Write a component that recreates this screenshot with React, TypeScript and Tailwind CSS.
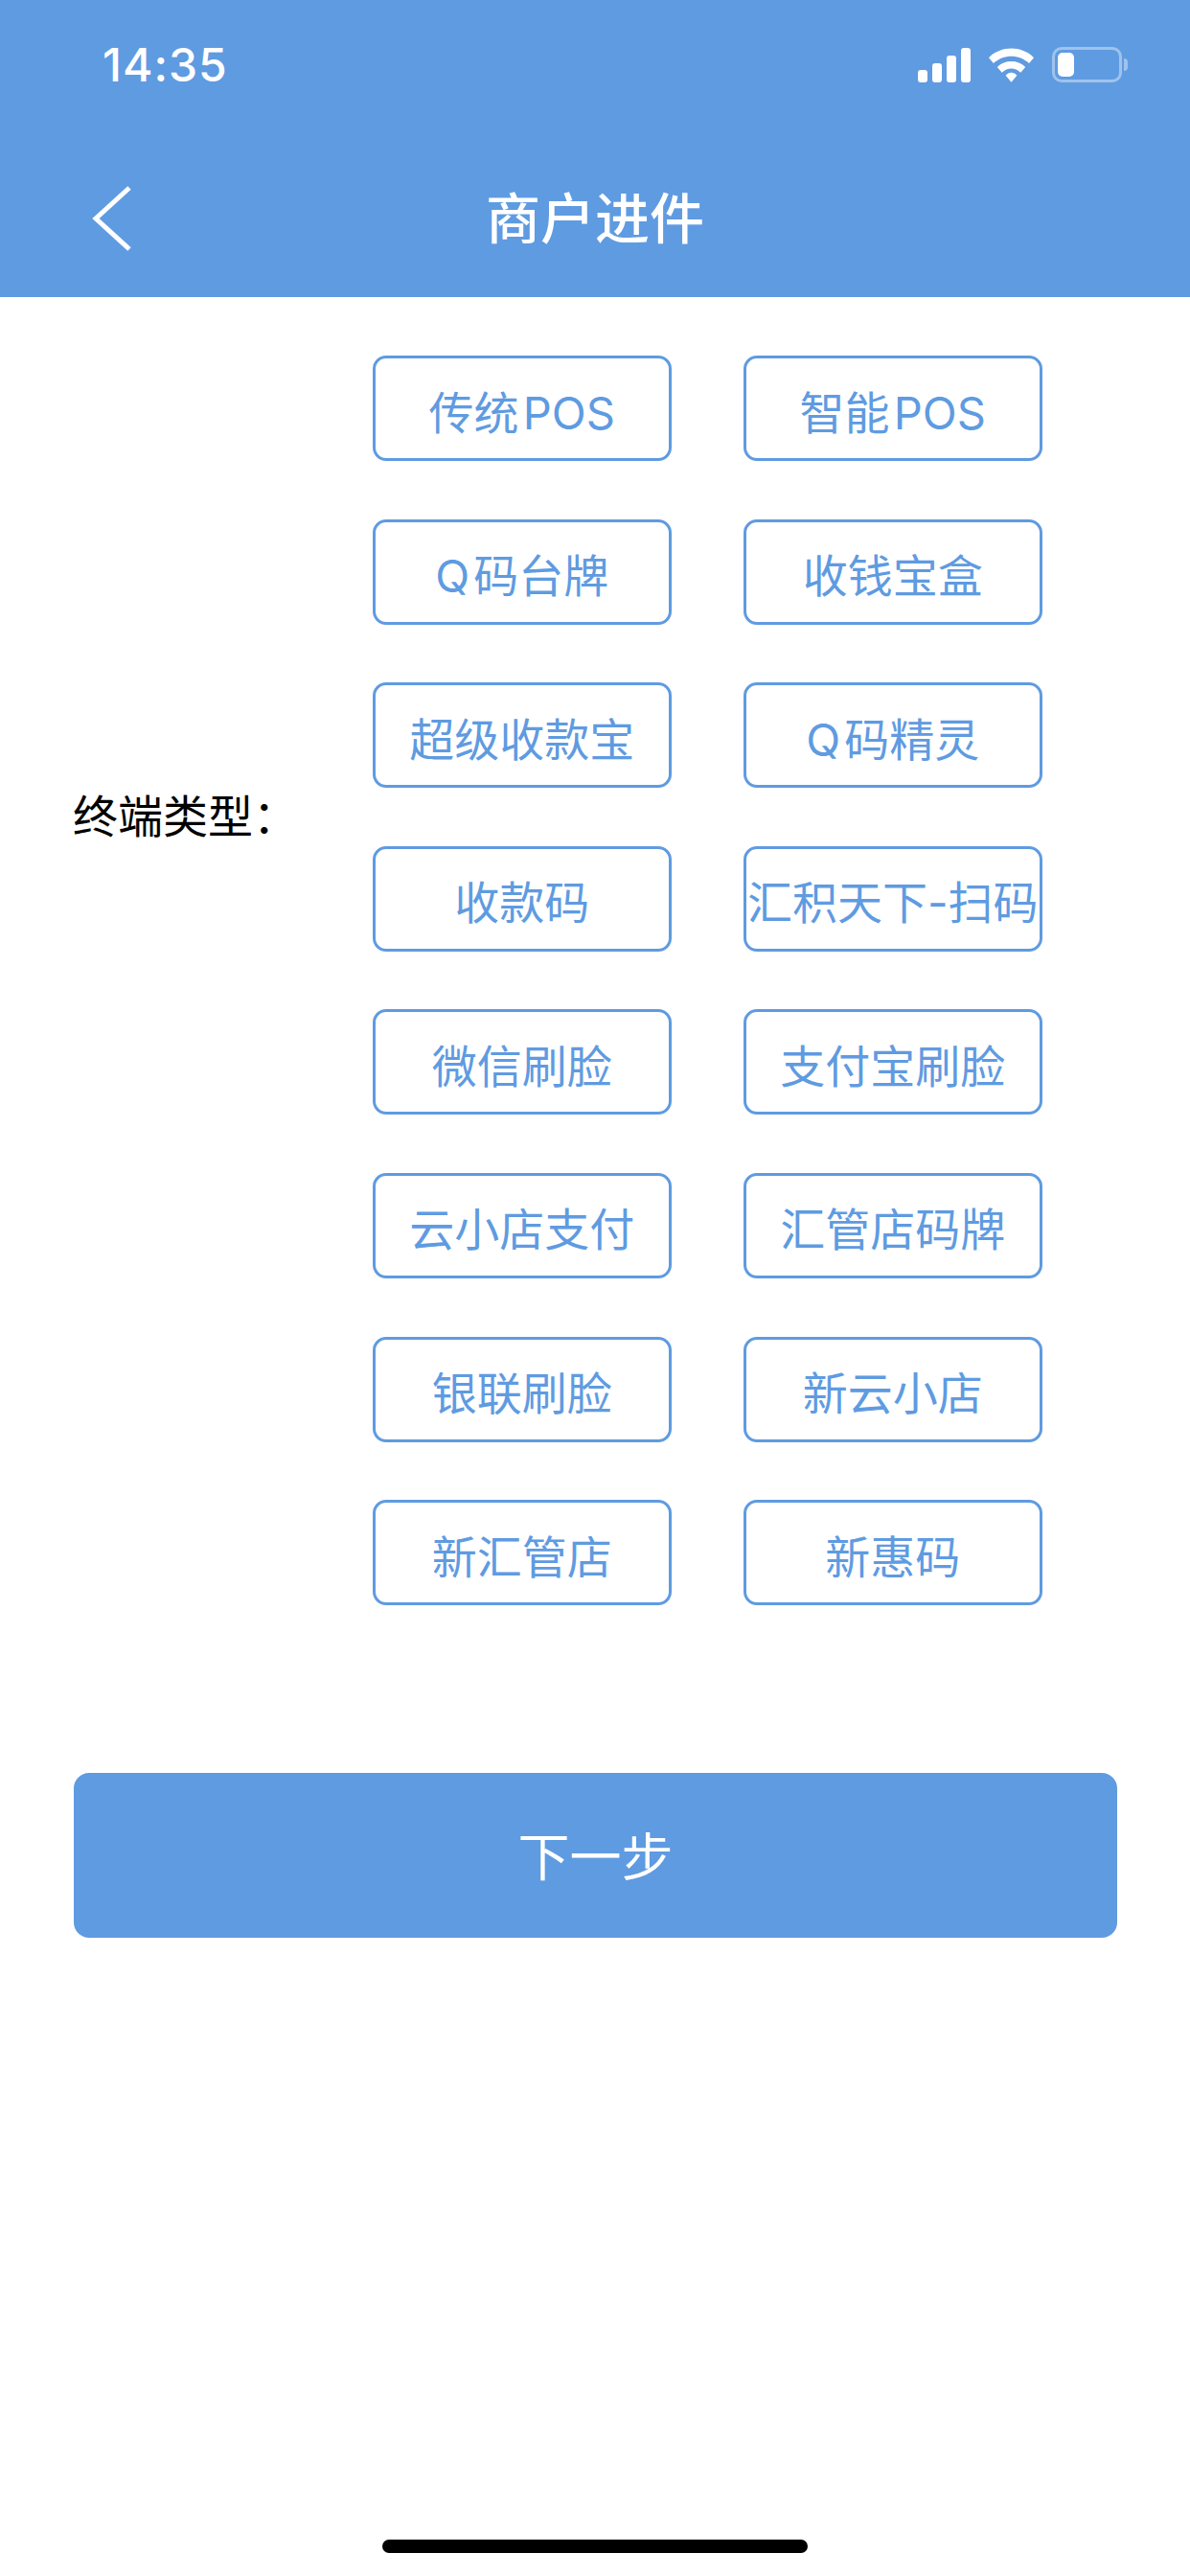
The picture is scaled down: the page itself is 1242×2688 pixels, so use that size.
import { useState } from "react";

// hair spaces keep latin runs off the CJK glyphs next to them
const terminalTypes = [
  "传统\u200aPOS",
  "智能\u200aPOS",
  "Q\u200a码台牌",
  "收钱宝盒",
  "超级收款宝",
  "Q\u200a码精灵",
  "收款码",
  "汇积天下-扫码",
  "微信刷脸",
  "支付宝刷脸",
  "云小店支付",
  "汇管店码牌",
  "银联刷脸",
  "新云小店",
  "新汇管店",
  "新惠码",
];

function StatusIcons() {
  return (
    <div className="flex items-center">
      <svg width="55" height="36" viewBox="0 0 55 36" className="block">
        <rect x="0" y="23" width="10" height="13" rx="3" fill="#fff" />
        <rect x="15" y="16" width="10" height="20" rx="3" fill="#fff" />
        <rect x="30" y="8" width="10" height="28" rx="3" fill="#fff" />
        <rect x="45" y="0" width="10" height="36" rx="3" fill="#fff" />
      </svg>
      <svg width="47" height="36" viewBox="0 0 48 36" className="ml-[19px] block">
        <path d="M0 10 C13 -3 35 -3 48 10 L43 16 C32 6 16 6 5 16 Z" fill="#fff" />
        <path d="M9 20 C17 12 31 12 39 20 L34 26 C28 20 20 20 14 26 Z" fill="#fff" />
        <path d="M18 29 C21 25 27 25 30 29 L24 36 Z" fill="#fff" />
      </svg>
      <div className="ml-[19px] flex items-center">
        <div className="flex h-[37px] w-[73px] items-center rounded-[10px] border-[3px] border-white/40 p-[3px]">
          <div className="h-[25px] w-[17px] rounded-[5px] bg-white" />
        </div>
        <div className="ml-[2px] h-[13px] w-[4px] rounded-r-full bg-white/40" />
      </div>
    </div>
  );
}

function TypeButton({ label, active, onClick }: { label: string; active: boolean; onClick: () => void }) {
  return (
    <button
      type="button"
      onClick={onClick}
      className={`flex h-[110px] w-[312.5px] items-center justify-center rounded-[14px] border-[3px] border-[#5f9be1] pt-[8px] text-[47px] leading-none whitespace-nowrap ${
        active ? "bg-[#5f9be1] text-white" : "bg-white text-[#5f9be1]"
      }`}
    >
      {label}
    </button>
  );
}

export default function App() {
  const [selected, setSelected] = useState<string | null>(null);

  return (
    <div className="relative flex h-[2688px] w-[1242px] flex-col bg-white font-['Inter','Noto_Sans_CJK_SC',sans-serif]">
      <header className="h-[310px] shrink-0 bg-[#5f9be1] text-white">
        <div className="flex h-[136px] items-start justify-between pt-[49px] pr-[65px] pl-[107px]">
          <span className="text-[48px] leading-[38px] font-medium tracking-[1px]">14:35</span>
          <StatusIcons />
        </div>
        <div className="relative flex h-[174px] items-start justify-center">
          <span className="mt-[50px] text-[57px] leading-[76px] font-medium font-['Noto_Sans_CJK_SC',sans-serif]">商户进件</span>
          <svg width="44" height="72" viewBox="0 0 44 72" className="absolute top-[57px] left-[95px]">
            <path d="M40 3 L5 35 L40 67" fill="none" stroke="#fff" strokeWidth="5" />
          </svg>
        </div>
      </header>

      <main className="flex flex-col px-[76px]">
        <section className="mt-[61px] flex items-start">
          <span className="mt-[454px] w-[312.5px] shrink-0 text-[47px] leading-none text-black font-['Noto_Sans_CJK_SC',sans-serif]">终端类型：</span>
          <div className="grid grid-cols-[312.5px_312.5px] gap-x-[74.5px] gap-y-[60.6px]">
            {terminalTypes.map((label) => (
              <TypeButton
                key={label}
                label={label}
                active={selected === label}
                onClick={() => setSelected(label)}
              />
            ))}
          </div>
        </section>

        <button
          type="button"
          className="mt-[175px] ml-[1px] h-[172px] w-[1089px] rounded-[16px] bg-[#5f9be1] pb-[2px] text-[54px] leading-none text-white font-['Noto_Sans_CJK_SC',sans-serif]"
        >
          下一步
        </button>
      </main>

      {/* home indicator */}
      <div className="absolute bottom-[24px] left-[399px] h-[14px] w-[444px] rounded-full bg-black" />
    </div>
  );
}
